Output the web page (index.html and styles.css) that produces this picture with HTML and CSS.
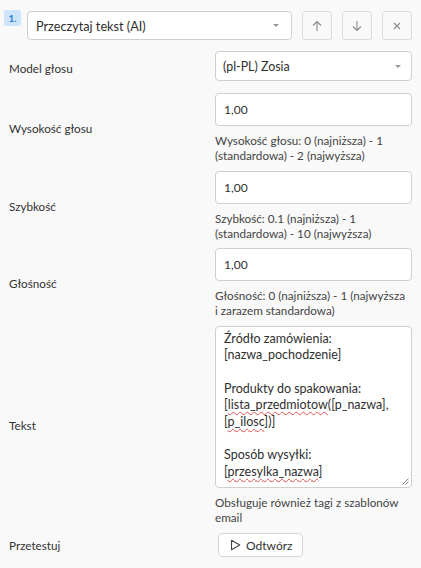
FILE: index.html
```html
<!DOCTYPE html>
<html lang="pl">
<head>
<meta charset="utf-8">
<title>Przeczytaj tekst (AI)</title>
<link rel="stylesheet" href="styles.css">
</head>
<body>
<div class="page">
  <div class="top">
    <span class="badge">1.</span>
    <div class="select select-main">
      <span>Przeczytaj tekst (AI)</span>
      <span class="caret"></span>
    </div>
    <button class="icon-btn" aria-label="W górę">
      <svg width="12" height="12" viewBox="0 0 12 12"><path d="M6 11V1.5M2 5.5L6 1.5L10 5.5" fill="none" stroke="#8a8a8a" stroke-width="1.1"/></svg>
    </button>
    <button class="icon-btn" aria-label="W dół">
      <svg width="12" height="12" viewBox="0 0 12 12"><path d="M6 1v9.5M2 6.5L6 10.5L10 6.5" fill="none" stroke="#8a8a8a" stroke-width="1.1"/></svg>
    </button>
    <button class="icon-btn" aria-label="Usuń">
      <svg width="10" height="10" viewBox="0 0 10 10"><path d="M2 2L8 8M8 2L2 8" fill="none" stroke="#8a8a8a" stroke-width="1.1"/></svg>
    </button>
  </div>

  <div class="form">
    <div class="label">Model głosu</div>
    <div class="field first">
      <div class="select select-field">
        <span>(pl-PL) Zosia</span>
        <span class="caret"></span>
      </div>
    </div>

    <div class="label">Wysokość głosu</div>
    <div class="field">
      <div class="input">1,00</div>
      <div class="help">Wysokość głosu: 0 (najniższa) - 1 (standardowa) - 2 (najwyższa)</div>
    </div>

    <div class="label">Szybkość</div>
    <div class="field">
      <div class="input">1,00</div>
      <div class="help">Szybkość: 0.1 (najniższa) - 1 (standardowa) - 10 (najwyższa)</div>
    </div>

    <div class="label">Głośność</div>
    <div class="field">
      <div class="input">1,00</div>
      <div class="help">Głośność: 0 (najniższa) - 1 (najwyższa i zarazem standardowa)</div>
    </div>

    <div class="label">Tekst</div>
    <div class="field">
      <div class="textarea" role="textbox"><div class="ta-text">Źródło zamówienia:
[nazwa_pochodzenie]

Produkty do spakowania:
[<span class="sp">lista_przedmiotow</span>([p_nazwa],
[<span class="sp">p_ilosc</span>])]

Sposób wysyłki:
[<span class="sp">przesylka_nazwa</span>]</div>
        <svg class="grip" width="8" height="8" viewBox="0 0 8 8"><path d="M7.5 1.5L1.5 7.5M7.5 4.5L4.5 7.5" stroke="#777" stroke-width="0.9"/></svg>
      </div>
      <div class="help">Obsługuje również tagi z szablonów email</div>
    </div>

    <div class="label">Przetestuj</div>
    <div class="field last">
      <button class="play-btn">
        <svg width="11" height="12" viewBox="0 0 11 12"><path d="M1.5 1.2L9.8 6L1.5 10.8Z" fill="none" stroke="#444" stroke-width="1.1" stroke-linejoin="round"/></svg>
        <span>Odtwórz</span>
      </button>
    </div>
  </div>
</div>
</body>
</html>
```

FILE: styles.css
```css
* { box-sizing: border-box; }
html, body { margin: 0; padding: 0; }
body {
  background: #f9f9f9;
  font-family: Lato, "Open Sans", "DejaVu Sans", sans-serif;
  color: #333;
}
.page {
  width: 421px;
  padding: 10px 9px 0 4px;
}
.top {
  display: flex;
  align-items: flex-start;
}
.badge {
  width: 17px;
  height: 16px;
  background: #cfe5fb;
  color: #2f7fd6;
  font-weight: 700;
  font-size: 10px;
  line-height: 16px;
  text-align: center;
  border-radius: 2px;
}
.select {
  display: flex;
  align-items: center;
  justify-content: space-between;
  background: #fff;
  border: 1px solid #cfcfcf;
  border-radius: 4px;
  color: #2f2f2f;
}
.select-main {
  margin-left: 6px;
  margin-top: 1px;
  width: 266px;
  height: 29px;
  padding: 0 12px 0 8px;
  font-size: 12.7px;
}
.caret {
  width: 0;
  height: 0;
  border-left: 3px solid transparent;
  border-right: 3px solid transparent;
  border-top: 3px solid #999;
}
.icon-btn {
  margin-left: 10px;
  margin-top: 1px;
  width: 30px;
  height: 29px;
  padding: 0;
  background: transparent;
  border: 1px solid #dcdcdc;
  border-radius: 3px;
  display: flex;
  align-items: center;
  justify-content: center;
}
.form {
  display: grid;
  grid-template-columns: 211px 197px;
  row-gap: 7.5px;
  align-items: center;
  margin-top: 11px;
}
.label {
  padding-left: 5px;
  font-size: 11.7px;
  color: #333;
}
.field.first { margin-bottom: 4.5px; }
.select-field {
  height: 30px;
  padding: 0 10px 0 7px;
  font-size: 12.4px;
}
.input {
  height: 33px;
  background: #fff;
  border: 1px solid #cfcfcf;
  border-radius: 4px;
  padding: 0 8px;
  font-size: 12px;
  line-height: 31px;
  color: #2f2f2f;
}
.help {
  margin-top: 7px;
  padding-right: 4px;
  font-size: 11.7px;
  line-height: 15px;
  color: #444;
}
.textarea {
  position: relative;
  height: 162px;
  background: #fff;
  border: 1px solid #cfcfcf;
  border-radius: 4px;
  padding: 4px 8px 2px;
  overflow: hidden;
}
.ta-text {
  white-space: pre-wrap;
  font-size: 12.5px;
  line-height: 16.7px;
  color: #2f2f2f;
}
.sp {
  text-decoration: underline wavy #e05050;
  text-decoration-thickness: 1px;
  text-underline-offset: 2px;
}
.grip {
  position: absolute;
  right: 2px;
  bottom: 2px;
}
.field.last { margin-top: 1px; padding-left: 3px; }
.play-btn {
  display: inline-flex;
  align-items: center;
  gap: 5px;
  height: 24px;
  padding: 0 10px 0 11px;
  background: #fff;
  border: 1px solid #d6d6d6;
  border-radius: 4px;
  font-family: inherit;
  font-size: 12px;
  color: #333;
}
```
